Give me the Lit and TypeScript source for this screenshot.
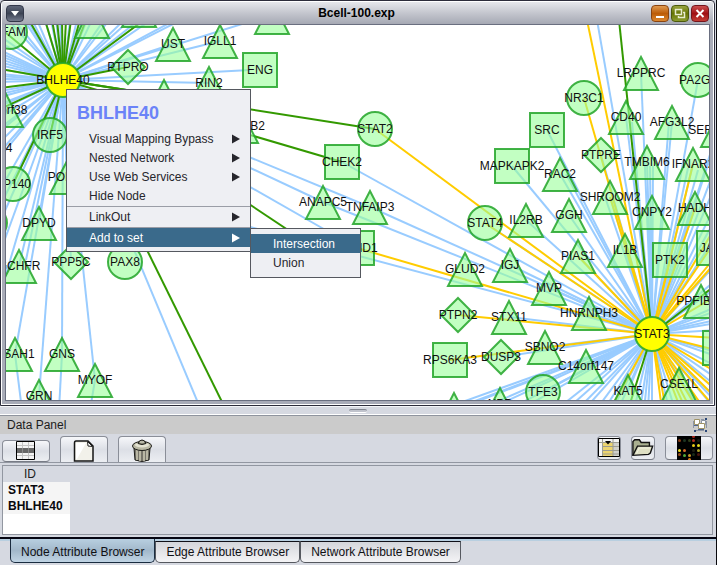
import { LitElement, html, svg, css } from "lit";
import { customElement } from "lit/decorators.js";

type Shape = "tri" | "sq" | "circ" | "dia" | "none";
type Node = [label: string, shape: Shape, x: number, y: number];
type Point = [x: number, y: number];

const NODES: Node[] = [
  ["TFAM", "circ", 10, 32],
  ["", "tri", 92, 21],
  ["", "tri", 139, 10],
  ["", "tri", 272, 17],
  ["PTPRO", "dia", 128, 67],
  ["UST", "tri", 173, 44],
  ["IGLL1", "tri", 220, 41],
  ["RIN2", "tri", 209, 83],
  ["", "tri", 164, 96],
  ["ENG", "sq", 260, 70],
  ["C1orf38", "tri", 6, 110],
  ["4", "none", 9, 148],
  ["IRF5", "circ", 50, 135],
  ["POLE2", "tri", 67, 177],
  ["EP140", "circ", 13, 184],
  ["", "circ", -10, 223],
  ["DPYD", "tri", 39, 223],
  ["GCHFR", "tri", 19, 266],
  ["PPP5C", "dia", 71, 262],
  ["PAX8", "circ", 125, 262],
  ["PSAH1", "tri", 15, 354],
  ["GNS", "tri", 62, 354],
  ["MYOF", "tri", 95, 380],
  ["GRN", "tri", 39, 396],
  ["NDUFB2", "tri", 241, 126],
  ["STAT2", "circ", 375, 129],
  ["CHEK2", "sq", 342, 162],
  ["ANAPC5", "tri", 323, 202],
  ["TNFAIP3", "tri", 370, 207],
  ["CCND1", "sq", 357, 248],
  ["NR3C1", "circ", 584, 98],
  ["LRPPRC", "tri", 641, 73],
  ["PA2G4", "circ", 698, 80],
  ["SRC", "sq", 547, 130],
  ["MAPKAPK2", "sq", 512, 166],
  ["RAC2", "tri", 560, 174],
  ["PTPRE", "dia", 601, 155],
  ["CD40", "tri", 626, 117],
  ["AFG3L2", "tri", 672, 122],
  ["SERPINA1", "tri", 718, 130],
  ["TMBIM6", "tri", 647, 162],
  ["IFNAR2", "tri", 693, 164],
  ["SHROOM2", "tri", 610, 197],
  ["HADH", "tri", 695, 208],
  ["CNPY2", "tri", 652, 212],
  ["GGH", "tri", 569, 215],
  ["IL2RB", "tri", 526, 220],
  ["STAT4", "circ", 485, 223],
  ["PIAS1", "tri", 578, 256],
  ["IL1B", "tri", 625, 250],
  ["PTK2", "sq", 670, 260],
  ["JAK2", "sq", 714, 248],
  ["IGJ", "tri", 510, 265],
  ["GLUD2", "tri", 465, 269],
  ["MVP", "tri", 549, 288],
  ["PPFIBP1", "tri", 701, 301],
  ["HNRNPH3", "tri", 589, 313],
  ["STX11", "tri", 509, 317],
  ["PTPN2", "dia", 458, 315],
  ["RPS6KA3", "sq", 450, 360],
  ["DUSP3", "dia", 501, 357],
  ["SBNO2", "tri", 545, 347],
  ["C14orf147", "tri", 586, 366],
  ["TFE3", "circ", 543, 392],
  ["KAT5", "tri", 628, 391],
  ["CSE1L", "tri", 679, 384],
  ["LYN", "sq", 720, 348],
  ["NPP", "tri", 500, 404],
  ["", "tri", 454, 409],
];

const BHLHE40: Point = [63, 80];
const STAT3: Point = [652, 334];

const row = (y: number, ...xs: number[]): Point[] => xs.map((x) => [x, y]);
const col = (x: number, ...ys: number[]): Point[] => ys.map((y) => [x, y]);

interface Fan {
  hub: Point;
  kind: "protein" | "dna" | "tf";
  ends: Point[];
}

const FANS: Fan[] = [
  {
    hub: BHLHE40,
    kind: "protein",
    ends: [
      ...row(20, 8, 14, 24, 27, 32, 37, 45, 51, 56, 60, 70, 77, 83, 87, 92, 104, 109, 124, 130, 151, 175, 181),
      ...col(0, 36, 42, 50, 53, 56, 59, 62, 65, 69, 74, 76, 79, 82, 91, 94, 97, 104, 106, 110, 117, 128, 131, 142, 152, 157),
      [139, 20], [173, 44], [220, 41], [290, 9], [250, 70], [209, 83], [164, 96],
      [0, 190], [0, 206], [0, 222], [-10, 280], [19, 266], [39, 223], [15, 354], [39, 396],
      [62, 354], [71, 262], [95, 380], [201, 410], [26, 260], [67, 177], [2, 288],
      [323, 202], [370, 207], [357, 248],
    ],
  },
  {
    hub: BHLHE40,
    kind: "tf",
    ends: [
      ...row(20, 29, 45, 52, 57, 62, 66, 71, 80, 86, 144),
      [0, 28], [0, 69], [0, 88], [0, 109], [13, 184], [50, 135], [128, 67], [164, 96],
      [375, 129], [342, 162], [226, 410], [330, 258],
    ],
  },
  {
    hub: STAT3,
    kind: "protein",
    ends: [
      [323, 202], [370, 207], [342, 162], [250, 227], [512, 166], [547, 130], [560, 174], [485, 223],
      [526, 220], [510, 265], [549, 288], [569, 215], [578, 256], [589, 313], [509, 317], [545, 347],
      [501, 357], [586, 366], [601, 155], [626, 117], [641, 73], [647, 162], [672, 122], [698, 80],
      [718, 130], [693, 164], [695, 208], [652, 212], [610, 197], [625, 250], [597, 20], [566, 174],
      [628, 391], [543, 392], [500, 404], [454, 409],
      [605, 197], [632, 122], [650, 166], [653, 166], [669, 122], [688, 168], [698, 170], [690, 212],
      ...row(410, 440, 455, 478, 508, 520, 556, 566, 577, 584, 596, 604, 612, 618, 634, 640, 644, 648, 652, 669, 675, 700, 716),
      ...col(716, 140, 166, 184, 204, 218, 236, 264, 280, 288, 307, 311, 316, 320, 323, 330, 352, 356, 366, 378, 386, 402),
    ],
  },
  {
    hub: STAT3,
    kind: "dna",
    ends: [
      [375, 129], [485, 223], [357, 248], [458, 315], [450, 360], [584, 98], [587, 20], [610, 197],
      [693, 164], [578, 256], [670, 260], [695, 208],
      ...col(716, 226, 240, 256, 262, 296, 338, 350, 372, 390, 398, 409),
      ...row(410, 610, 662, 666, 681, 686, 691, 698, 705),
    ],
  },
  { hub: STAT3, kind: "tf", ends: [[619, 20], [716, 285], [628, 410]] },
  { hub: [15, 354], kind: "protein", ends: [[22, 410]] },
  { hub: [62, 354], kind: "protein", ends: [[59, 410]] },
  { hub: [95, 380], kind: "protein", ends: [[90, 410]] },
];

const GENE_ROWS = ["STAT3", "BHLHE40"];
const TABS = ["Node Attribute Browser", "Edge Attribute Browser", "Network Attribute Browser"];

const CHIP_SPOTS: [number, number, string][] = [
  [2, 4, "#8a3c14"], [7, 4, "#1c3420"], [12, 4, "#2c3c18"], [16, 0, "#a02418"], [16, 4, "#b02c20"],
  [16, 9, "#e8c818"], [21, 9, "#e8dc20"], [2, 14, "#f0e020"], [7, 14, "#d86c28"], [21, 14, "#a8a028"],
  [2, 18, "#984c18"], [7, 19, "#50a838"], [12, 19, "#c89c28"], [16, 18, "#182c18"], [21, 18, "#4c1810"],
  [12, 23, "#e07818"], [16, 14, "#202010"], [21, 4, "#181c14"],
];

@customElement("network-canvas")
export class NetworkCanvas extends LitElement {
  static styles = css`
    :host {
      display: flex;
      min-width: 0;
    }
    .graph {
      flex: 1;
      width: 100%;
      min-height: 320px;
      background: #fff;
      font: 12px "Liberation Sans", Arial, sans-serif;
    }
    .edge {
      stroke-width: 2;
    }
    .protein {
      stroke: #99ccff;
    }
    .dna {
      stroke: #ffcc00;
    }
    .tf {
      stroke: #339900;
    }
    .node {
      fill: #99ff99;
      fill-opacity: 0.6;
      stroke: #22a428;
      stroke-opacity: 0.85;
      stroke-width: 2;
    }
    .selected {
      fill: #ffff00;
      fill-opacity: 1;
    }
    .label {
      fill: #101010;
      text-anchor: middle;
    }
  `;

  private shape(kind: Shape, x: number, y: number) {
    switch (kind) {
      case "tri":
        return svg`<path class="node" d="M${x} ${y - 16}L${x + 17} ${y + 17}H${x - 17}Z" />`;
      case "sq":
        return svg`<rect class="node" x=${x - 17} y=${y - 17} width="34" height="34" />`;
      case "circ":
        return svg`<circle class="node" cx=${x} cy=${y} r="17" />`;
      case "dia":
        return svg`<path class="node" d="M${x} ${y - 17}l17 17l-17 17l-17 -17Z" />`;
      default:
        return null;
    }
  }

  render() {
    return html`
      <svg class="graph" role="img" aria-label="Gene interaction network">
        <g transform="translate(-6 -25)">
          ${FANS.map((fan) =>
            fan.ends.map(
              ([x, y]) =>
                svg`<line class="edge ${fan.kind}" x1=${fan.hub[0]} y1=${fan.hub[1]} x2=${x} y2=${y} />`
            )
          )}
          ${NODES.map(
            ([label, kind, x, y]) => svg`${this.shape(kind, x, y)}
              <text class="label" x=${x} y=${y + 4}>${label}</text>`
          )}
          <circle class="node selected" cx=${BHLHE40[0]} cy=${BHLHE40[1]} r="17" />
          <text class="label" x=${BHLHE40[0]} y=${BHLHE40[1] + 4}>BHLHE40</text>
          <circle class="node selected" cx=${STAT3[0]} cy=${STAT3[1]} r="17" />
          <text class="label" x=${STAT3[0]} y=${STAT3[1] + 4}>STAT3</text>
        </g>
      </svg>
    `;
  }
}

@customElement("node-menu")
export class NodeMenu extends LitElement {
  static styles = css`
    :host {
      display: block;
      font: 12px "Liberation Sans", Arial, sans-serif;
      color: #26262c;
    }
    .menu {
      box-sizing: border-box;
      margin: 0;
      padding: 0 0 4px;
      width: 185px;
      list-style: none;
      background: #eeeff3;
      border: 1px solid #55585f;
    }
    .heading {
      padding: 10px 10px 3px;
      font-size: 18px;
      line-height: 26px;
      font-weight: bold;
      color: #6b83f8;
    }
    .entry {
      position: relative;
    }
    .item {
      display: flex;
      align-items: center;
      justify-content: space-between;
      width: 100%;
      height: 19px;
      padding: 0 10px 0 22px;
      border: 0;
      background: none;
      font: inherit;
      color: inherit;
      text-align: left;
    }
    .active {
      background: #3a6a8b;
      color: #fff;
    }
    .arrow {
      width: 8px;
      height: 10px;
      fill: currentColor;
    }
    .rule {
      height: 1px;
      margin: 1px 0 0;
      border: 0;
      background: #9a9da6;
    }
    .submenu {
      position: absolute;
      top: 0;
      left: 100%;
      width: 111px;
      padding: 5px 0;
      color: #26262c;
    }
  `;

  private item(text: string, more = false, active = false) {
    return html`<button class="item ${active ? "active" : ""}" role="menuitem">
      ${text}
      ${more ? html`<svg class="arrow" viewBox="0 0 8 10"><path d="M0 0.500L8 5L0 9.500Z" /></svg>` : null}
    </button>`;
  }

  render() {
    return html`
      <ul class="menu" role="menu">
        <li class="heading" role="presentation">BHLHE40</li>
        <li class="entry">${this.item("Visual Mapping Bypass", true)}</li>
        <li class="entry">${this.item("Nested Network", true)}</li>
        <li class="entry">${this.item("Use Web Services", true)}</li>
        <li class="entry">${this.item("Hide Node")}</li>
        <li role="separator"><hr class="rule" /></li>
        <li class="entry">${this.item("LinkOut", true)}</li>
        <li role="separator"><hr class="rule" /></li>
        <li class="entry">
          ${this.item("Add to set", true, true)}
          <ul class="menu submenu" role="menu">
            <li class="entry">${this.item("Intersection", false, true)}</li>
            <li class="entry">${this.item("Union")}</li>
          </ul>
        </li>
      </ul>
    `;
  }
}

@customElement("data-panel")
export class DataPanel extends LitElement {
  static styles = css`
    :host {
      display: block;
      font: 12px "Liberation Sans", Arial, sans-serif;
      color: #1c1c20;
    }
    .header {
      display: flex;
      align-items: center;
      justify-content: space-between;
      height: 18px;
      padding: 0 8px 0 7px;
      border-top: 1px solid #8f949e;
      background: #cbcbcb;
    }
    .float {
      display: block;
      padding: 0;
      border: 0;
      background: none;
    }
    .float svg,
    .tool svg {
      display: block;
    }
    .toolbar {
      display: flex;
      align-items: flex-end;
      gap: 10px;
      height: 28px;
      padding: 0 3px 0 2px;
      border-bottom: 1px solid #9297a1;
    }
    .tool {
      display: flex;
      justify-content: center;
      align-items: flex-end;
      box-sizing: border-box;
      height: 26px;
      width: 48px;
      padding: 0;
      border: 1px solid #8a8e98;
      border-bottom: 0;
      border-radius: 4px 4px 0 0;
      background: linear-gradient(#f6f7fa, #dcdfe6 50%, #eceef2);
    }
    .low {
      height: 22px;
      align-items: center;
      border-bottom: 1px solid #777b85;
      border-radius: 4px;
    }
    .spacer {
      flex: 1;
    }
    .raised {
      align-self: flex-start;
      align-items: center;
      height: 24px;
      margin-top: 2px;
      border-bottom: 1px solid #777b85;
      border-radius: 4px;
    }
    .small {
      width: 24px;
    }
    .pane {
      display: flex;
      margin: 2px 3px 2px 2px;
      border: 1px solid #9297a1;
    }
    .column {
      background: #fff;
      padding-bottom: 20px;
    }
    .genes {
      width: 67px;
      border-collapse: collapse;
    }
    .genes th {
      height: 16px;
      padding: 0 13px 0 0;
      line-height: 16px;
      font-weight: normal;
      background: #d6d9e1;
    }
    .genes td {
      height: 16px;
      padding: 0 5px;
      line-height: 16px;
      font-weight: bold;
      color: #08080c;
      background: #f5f5f5;
    }
    .tabs {
      display: flex;
      padding: 0 10px 2px;
      background: linear-gradient(#b8cfe0 2px, #d6d9e1 2px);
      border-top: 2px solid #050512;
    }
    .tab {
      box-sizing: border-box;
      height: 22px;
      margin: 2px 0 0;
      padding: 0 10px;
      border: 1px solid #55585f;
      border-top-color: #101018;
      border-radius: 0 0 5px 5px;
      background: linear-gradient(#d4d6db, #f4f4f6);
      font: inherit;
      color: #101014;
    }
    .current {
      margin-top: 0;
      padding-top: 2px;
      height: 24px;
      border-color: #1a2c40;
      border-top: 0;
      background: linear-gradient(#b8cfe0, #a2b8cb 50%, #c0d4e4);
    }
  `;

  render() {
    return html`
      <div class="header">
        <span>Data Panel</span>
        <button class="float" aria-label="Float panel">
          <svg width="15" height="14" viewBox="0 0 15 14">
            <path d="M0.500 3v7M3 12.500h8M8 1.500h3M13.500 3v7" stroke="#8c94a4" fill="none" />
            <path d="M1.500 1.500h5v5h-5Z" fill="#fff" stroke="#a09468" />
            <path d="M8.500 2.500h4v4h-4Z" fill="#fff" stroke="#8c94a4" />
            <path d="M5.500 5.500h6v5h-6Z" fill="#fff" stroke="#a09468" />
            <path d="M1 7h4v1h-4ZM5 11h6v1h-6Z" fill="#4c6490" />
            <path d="M1 12h2v2h-2ZM12 0h2v2h-2ZM12 12h2v2h-2Z" fill="#2c4878" />
          </svg>
        </button>
      </div>
      <div class="toolbar">
        <button class="tool low" aria-label="Select attributes">
          <svg width="20" height="20" viewBox="0 0 20 20">
            <path d="M0.500 0.500h18v18h-18Z" fill="#f4f4f4" stroke="#000" />
            <path d="M6.500 1v17M12.500 1v17M1 4.500h17M1 14.500h17" stroke="#c4c4c4" />
            <path d="M1 7h17v5h-17Z" fill="#686868" />
            <path d="M6.500 7v5M12.500 7v5" stroke="#8c8c8c" />
          </svg>
        </button>
        <button class="tool" aria-label="New attribute">
          <svg width="22" height="22" viewBox="0 0 22 22">
            <path d="M1.500 21V3Q1.500 1 3 1H15L20 6V21Z" fill="#f2f1ea" stroke="#151515" stroke-width="1.500" />
            <path d="M3 19V3h10L4 19Z" fill="#fff" />
            <path d="M14.500 1.500L15 6L19.500 6.500Z" fill="#fff" stroke="#222" />
          </svg>
        </button>
        <button class="tool" aria-label="Delete attribute">
          <svg width="22" height="23" viewBox="0 0 22 23">
            <path d="M3 9H19L18 21Q11 24 4 21Z" fill="#77756a" stroke="#1c1c18" />
            <path d="M6 11v10M9 12v10M13 12v10M16 11v10" stroke="#d0cdb8" stroke-width="1.500" />
            <ellipse cx="11" cy="7" rx="9.500" ry="4.500" fill="#b9b8a4" stroke="#1c1c18" />
            <ellipse cx="11" cy="6" rx="7" ry="2.500" fill="#e4e3d2" />
            <path d="M7 4.500Q8 1 11 1Q14 1 15 4.500Q11 6.500 7 4.500Z" fill="#8c8c7c" stroke="#1c1c18" />
            <path d="M9 3h4" stroke="#e4e3d2" />
          </svg>
        </button>
        <span class="spacer"></span>
        <button class="tool raised small" aria-label="Show columns">
          <svg width="22" height="20" viewBox="0 0 22 20">
            <path d="M0.500 0.500h21v18h-21Z" fill="#f4f4f4" stroke="#000" />
            <path d="M4 4h11v14h-11Z" fill="#ecd470" />
            <path d="M15 4h6v14h-6Z" fill="#d0d0cc" />
            <path d="M4.500 1v17M15 1v17M1 4.500h20M4 8.500h17M4 12.500h17M4 16h17" stroke="#9c9c90" />
            <path d="M7 3h6l-3 3.500Z" fill="#000" />
          </svg>
        </button>
        <button class="tool raised small" aria-label="Open">
          <svg width="24" height="20" viewBox="0 0 24 20">
            <path d="M1 18V3L3 1H8L10 4H19V10" fill="#aab090" stroke="#111" stroke-width="1.500" />
            <path d="M1 18L6 8H22.500L20 15.500L18 17Z" fill="#dfe0c4" stroke="#111" stroke-width="1.500" />
            <path d="M5 16L8 10H20" fill="none" stroke="#f4f4e4" />
          </svg>
        </button>
        <button class="tool raised" aria-label="Heat map">
          <svg width="24" height="24" viewBox="0 0 24 24">
            <path d="M0 0h24v24h-24Z" fill="#000" />
            ${CHIP_SPOTS.map(([x, y, c]) => svg`<circle cx=${x + 0.5} cy=${y + 0.5} r="1.500" fill=${c} />`)}
          </svg>
        </button>
      </div>
      <div class="pane">
        <div class="column">
          <table class="genes">
            <thead>
              <tr><th scope="col">ID</th></tr>
            </thead>
            <tbody>
              ${GENE_ROWS.map((id) => html`<tr><td>${id}</td></tr>`)}
            </tbody>
          </table>
        </div>
      </div>
      <div class="tabs" role="tablist">
        ${TABS.map(
          (t, i) => html`<button class="tab ${i === 0 ? "current" : ""}" role="tab" aria-selected=${i === 0}>${t}</button>`
        )}
      </div>
    `;
  }
}

@customElement("app-root")
export class AppRoot extends LitElement {
  static styles = css`
    :host {
      display: flex;
      flex-direction: column;
      box-sizing: border-box;
      min-height: 100vh;
      border-right: 1px solid #08080c;
      background: #d6d9e1;
      font: 12px "Liberation Sans", Arial, sans-serif;
    }
    .window {
      flex: 1;
      display: flex;
      flex-direction: column;
      margin-right: 1px;
      border: 1px solid #2c2c3a;
      background: #fff;
      border-radius: 4px 4px 0 0;
    }
    .frame {
      flex: 1;
      display: flex;
      flex-direction: column;
      padding: 0 3px 3px;
      margin: 1px;
      background: #a9acb8;
    }
    .titlebar {
      display: flex;
      align-items: center;
      gap: 2px;
      height: 22px;
      margin: 0 -3px;
      padding: 0 4px;
      background: linear-gradient(#e6e7eb, #c4c6ce 50%, #a6a9b4);
    }
    .title {
      flex: 1;
      margin: 0;
      padding-left: 38px;
      text-align: center;
      font-size: 12px;
      color: #000;
    }
    .control {
      display: block;
      box-sizing: border-box;
      width: 18px;
      height: 17px;
      padding: 0;
      border: 1px solid #33384a;
      border-radius: 4px;
      background: linear-gradient(#5f6678, #3c4354 50%, #737a8c);
    }
    .control svg {
      display: block;
    }
    .minimize {
      border-color: #8a4410;
      background: linear-gradient(#e09a50, #bc5c08 50%, #dc8830);
    }
    .restore {
      border-color: #4c5a0c;
      background: linear-gradient(#98a440, #667404 50%, #8c9c30);
    }
    .close {
      border-color: #74141c;
      background: linear-gradient(#cc5050, #a01014 50%, #c43c34);
    }
    .canvas {
      flex: 1;
      display: flex;
      position: relative;
      border: 1px solid #6a6f80;
    }
    .network {
      flex: 1;
    }
    .popup {
      position: absolute;
      left: 60px;
      top: 64px;
    }
    .splitter {
      display: flex;
      justify-content: center;
      align-items: center;
      height: 7px;
      border-top: 1px solid #f4f5f8;
      border-bottom: 1px solid #fff;
    }
    .grip {
      width: 18px;
      height: 2px;
      border-radius: 3px;
      border-top: 1px solid #80848e;
      border-bottom: 1px solid #fff;
      background: #c0c3cc;
    }
  `;

  render() {
    return html`
      <section class="window">
        <div class="frame">
          <header class="titlebar">
            <button class="control" aria-label="Window menu">
              <svg width="16" height="15" viewBox="0 0 16 15"><path d="M4 5h8l-4 5Z" fill="#fff" /></svg>
            </button>
            <h1 class="title">Bcell-100.exp</h1>
            <button class="control minimize" aria-label="Minimize">
              <svg width="16" height="15" viewBox="0 0 16 15"><path d="M4 10h8v2h-8Z" fill="#fff" /></svg>
            </button>
            <button class="control restore" aria-label="Restore">
              <svg width="16" height="15" viewBox="0 0 16 15">
                <path d="M3.500 3.500h6v5h-6ZM11 6.500h1.500v5h-6v-1.500" fill="none" stroke="#e8ecd0" stroke-width="1.500" />
              </svg>
            </button>
            <button class="control close" aria-label="Close">
              <svg width="16" height="15" viewBox="0 0 16 15">
                <path d="M4.500 4l7 7M11.500 4l-7 7" fill="none" stroke="#fff" stroke-width="2" />
              </svg>
            </button>
          </header>
          <div class="canvas">
            <network-canvas class="network"></network-canvas>
            <node-menu class="popup"></node-menu>
          </div>
        </div>
      </section>
      <div class="splitter"><span class="grip"></span></div>
      <data-panel></data-panel>
    `;
  }
}
